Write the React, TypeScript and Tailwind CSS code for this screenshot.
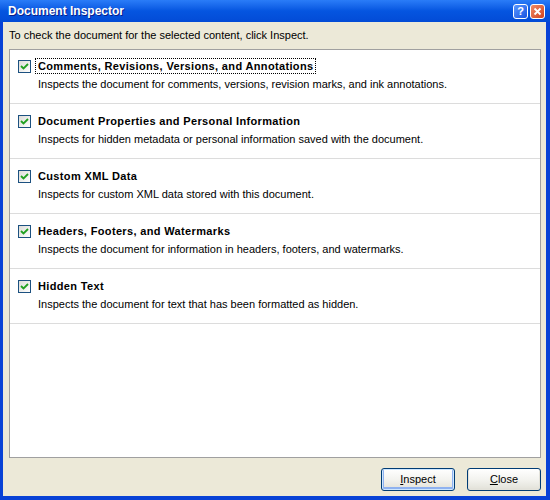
import React from "react";

const ITEMS = [
  {
    title: "Comments, Revisions, Versions, and Annotations",
    desc: "Inspects the document for comments, versions, revision marks, and ink annotations.",
    focused: true,
  },
  {
    title: "Document Properties and Personal Information",
    desc: "Inspects for hidden metadata or personal information saved with the document.",
  },
  {
    title: "Custom XML Data",
    desc: "Inspects for custom XML data stored with this document.",
  },
  {
    title: "Headers, Footers, and Watermarks",
    desc: "Inspects the document for information in headers, footers, and watermarks.",
  },
  {
    title: "Hidden Text",
    desc: "Inspects the document for text that has been formatted as hidden.",
  },
];

function CheckBox() {
  return (
    <div className="w-[13px] h-[13px] shrink-0 border border-[#1c5180] bg-gradient-to-br from-[#dcdcd7] to-white flex items-center justify-center">
      <svg width="9" height="9" viewBox="0 0 9 9">
        <path d="M1 4 L3.5 6.5 L8 2" fill="none" stroke="#21a121" strokeWidth="1.8" />
      </svg>
    </div>
  );
}

function XPButton({ label, isDefault = false }: { label: string; isDefault?: boolean }) {
  return (
    <button
      className={`w-[74px] h-[23px] rounded-[3px] border border-[#003c74] bg-gradient-to-b from-white via-[#f3f3ef] to-[#e2e1d8] text-[11px] text-black leading-none ${
        isDefault ? "shadow-[inset_0_0_0_1px_#cee7ff,inset_0_-1px_0_2px_#8fb2f0]" : "shadow-[inset_0_-1px_0_1px_#e3e2da]"
      }`}
    >
      <span className="underline">{label[0]}</span>
      {label.slice(1)}
    </button>
  );
}

export default function App() {
  return (
    <div
      className="w-[550px] h-[500px] flex flex-col bg-[#0842d6] overflow-hidden"
      style={{ fontFamily: '"Liberation Sans", Arial, sans-serif' }}
    >
      {/* title bar */}
      <div className="h-[22px] shrink-0 flex items-center pl-[8px] pr-[5px] bg-gradient-to-b from-[#2a7cf8] via-[#0555e0] to-[#034bd6]">
        <span className="flex-1 text-white font-bold text-[12px] [text-shadow:1px_1px_0_#0a1e8a]">
          Document Inspector
        </span>
        <div className="flex gap-[2px] items-center">
          <div className="w-[15px] h-[15px] rounded-[3px] border border-white bg-gradient-to-br from-[#5a97ff] to-[#1a52e0] flex items-center justify-center text-white text-[11px] font-bold leading-none">
            ?
          </div>
          <div className="w-[15px] h-[15px] rounded-[3px] border border-white bg-gradient-to-br from-[#f08a64] to-[#d0401c] flex items-center justify-center">
            <svg width="9" height="9" viewBox="0 0 9 9">
              <path d="M1.5 1.5 L7.5 7.5 M7.5 1.5 L1.5 7.5" stroke="white" strokeWidth="1.8" />
            </svg>
          </div>
        </div>
      </div>

      {/* body */}
      <div className="flex-1 ml-[3px] mr-[4px] mb-[4px] bg-[#ece9d8] flex flex-col pl-[6px] pr-[5px] pt-[6px]">
        <p className="text-[11px] leading-[14px] text-black">
          To check the document for the selected content, click Inspect.
        </p>
        <div className="mt-[7px] h-[409px] w-[532px] bg-white border border-[#a0a0a0] flex flex-col">
          {ITEMS.map((it, i) => (
            <div
              key={it.title}
              className={`flex gap-[7px] pl-[8px] pr-[2px] pb-[12px] border-b border-[#dcdcdc] ${i === 0 ? "pt-[10px]" : "pt-[11px]"}`}
            >
              <CheckBox />
              <div className="flex flex-col gap-[4px] -mt-[1px]">
                <span
                  className={`text-[11px] leading-[14px] font-bold tracking-[0.35px] text-black self-start ${
                    it.focused ? "outline outline-1 outline-dotted outline-black outline-offset-0 -ml-[2px] pl-[2px] pr-[2px]" : ""
                  }`}
                >
                  {it.title}
                </span>
                <span className="text-[11px] leading-[14px] text-black">{it.desc}</span>
              </div>
            </div>
          ))}
        </div>
        <div className="mt-[10px] flex justify-end gap-[12px]">
          <XPButton label="Inspect" isDefault />
          <XPButton label="Close" />
        </div>
      </div>
    </div>
  );
}
